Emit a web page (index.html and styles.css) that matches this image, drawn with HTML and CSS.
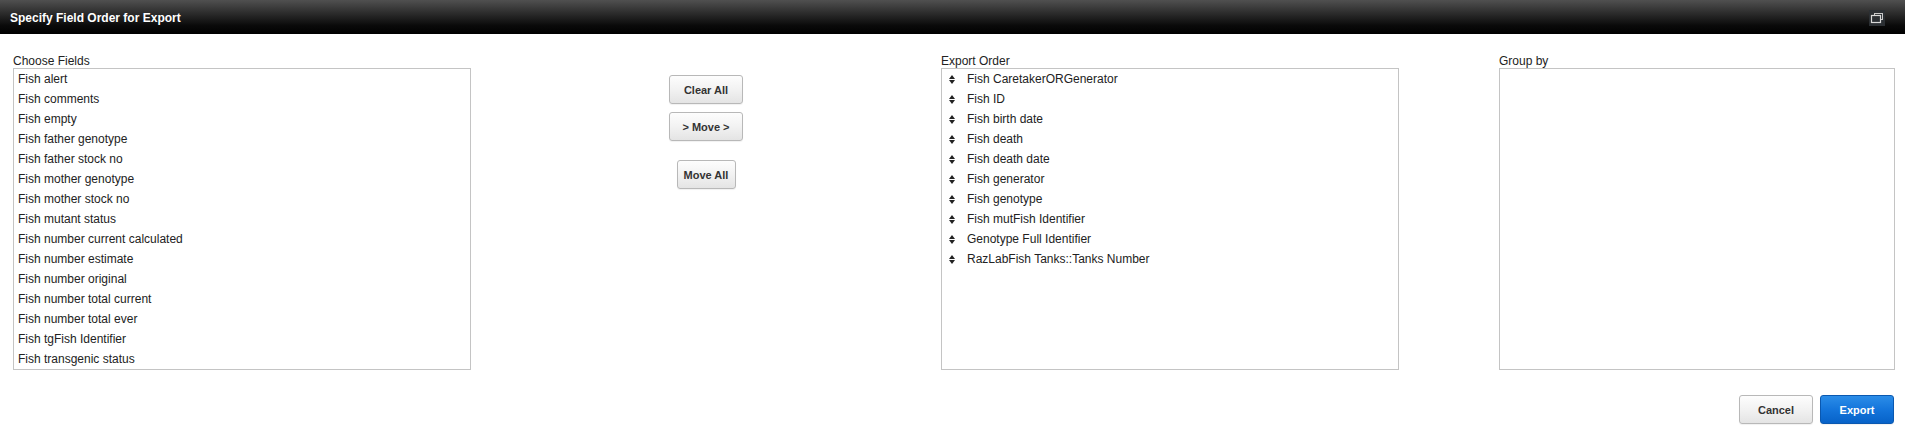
FILE: index.html
```html
<!DOCTYPE html>
<html>
<head>
<meta charset="utf-8">
<title>Specify Field Order for Export</title>
<link rel="stylesheet" href="styles.css">
</head>
<body>
<div class="dialog">
  <header class="titlebar">
    <span class="title">Specify Field Order for Export</span>
    <span class="restore">
      <svg width="16" height="16" viewBox="0 0 16 16">
        <rect x="5.5" y="3.5" width="8" height="6" fill="none" stroke="#c8c8c8" stroke-width="1"/>
        <rect x="2.5" y="5.5" width="9" height="7" fill="#2b2f33" stroke="#d8d8d8" stroke-width="1.2"/>
      </svg>
    </span>
  </header>
  <main class="panes">
    <section class="col col-fields">
      <div class="label">Choose Fields</div>
      <ul class="listbox">
        <li>Fish alert</li>
        <li>Fish comments</li>
        <li>Fish empty</li>
        <li>Fish father genotype</li>
        <li>Fish father stock no</li>
        <li>Fish mother genotype</li>
        <li>Fish mother stock no</li>
        <li>Fish mutant status</li>
        <li>Fish number current calculated</li>
        <li>Fish number estimate</li>
        <li>Fish number original</li>
        <li>Fish number total current</li>
        <li>Fish number total ever</li>
        <li>Fish tgFish Identifier</li>
        <li>Fish transgenic status</li>
      </ul>
    </section>
    <section class="col col-actions">
      <button class="btn btn-wide">Clear All</button>
      <button class="btn btn-wide">&gt; Move &gt;</button>
      <button class="btn btn-narrow spaced">Move All</button>
    </section>
    <section class="col col-order">
      <div class="label">Export Order</div>
      <ul class="listbox sortable">
        <li><span class="grip"></span>Fish CaretakerORGenerator</li>
        <li><span class="grip"></span>Fish ID</li>
        <li><span class="grip"></span>Fish birth date</li>
        <li><span class="grip"></span>Fish death</li>
        <li><span class="grip"></span>Fish death date</li>
        <li><span class="grip"></span>Fish generator</li>
        <li><span class="grip"></span>Fish genotype</li>
        <li><span class="grip"></span>Fish mutFish Identifier</li>
        <li><span class="grip"></span>Genotype Full Identifier</li>
        <li><span class="grip"></span>RazLabFish Tanks::Tanks Number</li>
      </ul>
    </section>
    <section class="col col-group">
      <div class="label">Group by</div>
      <ul class="listbox"></ul>
    </section>
  </main>
  <footer class="footer">
    <button class="btn btn-wide">Cancel</button>
    <button class="btn btn-wide btn-primary">Export</button>
  </footer>
</div>
</body>
</html>
```
FILE: styles.css
```css
* { box-sizing: border-box; }
html, body {
  margin: 0;
  padding: 0;
  background: #fff;
  font-family: "Liberation Sans", Arial, Helvetica, sans-serif;
  color: #222;
}
.dialog {
  width: 1905px;
  height: 441px;
  overflow: hidden;
}
.titlebar {
  height: 34px;
  display: flex;
  align-items: center;
  justify-content: space-between;
  padding: 0 20px 0 10px;
  background: linear-gradient(to bottom, #505050 0%, #262626 45%, #0a0a0a 75%, #000 100%);
}
.title {
  color: #fff;
  font-weight: bold;
  font-size: 12px;
  line-height: 14px;
  margin-top: 1px;
}
.restore {
  width: 16px;
  height: 16px;
  background: #2b2f33;
  display: flex;
  margin-top: 2px;
}
.panes {
  display: flex;
  padding: 20px 10px 0 13px;
}
.label {
  font-size: 12px;
  line-height: 14px;
  color: #222;
}
.listbox {
  list-style: none;
  margin: 0;
  padding: 0;
  height: 302px;
  border: 1px solid #c4c4c4;
  overflow: hidden;
}
.listbox li {
  font-size: 12px;
  height: 20px;
  line-height: 20px;
  padding-left: 4px;
  color: #222;
  white-space: nowrap;
  display: flex;
  align-items: center;
}
.col-fields, .col-order { width: 458px; }
.col-actions {
  width: 470px;
  display: flex;
  flex-direction: column;
  align-items: center;
  padding-top: 21px;
}
.col-group {
  width: 396px;
  margin-left: auto;
}
.sortable li { padding-left: 7px; }
.grip {
  width: 6px;
  height: 9px;
  margin-right: 12px;
  position: relative;
  flex: none;
}
.grip::before, .grip::after {
  content: "";
  position: absolute;
  left: 0;
  border-left: 3px solid transparent;
  border-right: 3px solid transparent;
}
.grip::before { top: 0; border-bottom: 4px solid #222; }
.grip::after { bottom: 0; border-top: 4px solid #222; }
.btn {
  height: 29px;
  border: 1px solid #b8b8b8;
  border-radius: 3px;
  background: linear-gradient(to bottom, #fdfdfd 0%, #f2f2f2 50%, #e4e4e4 100%);
  font-family: "Liberation Sans", Arial, Helvetica, sans-serif;
  font-weight: bold;
  font-size: 11px;
  color: #333;
  padding: 0;
  box-shadow: 0 1px 1px rgba(0,0,0,0.06);
}
.btn-wide { width: 74px; }
.btn-narrow { width: 59px; }
.col-actions .btn + .btn { margin-top: 8px; }
.col-actions .btn.spaced { margin-top: 19px; }
.btn-primary {
  background: linear-gradient(to bottom, #2b8de8 0%, #1475db 50%, #0762c8 100%);
  border-color: #0a58b0;
  color: #fff;
}
.footer {
  display: flex;
  justify-content: flex-end;
  gap: 7px;
  padding: 25px 11px 0 0;
}
```
